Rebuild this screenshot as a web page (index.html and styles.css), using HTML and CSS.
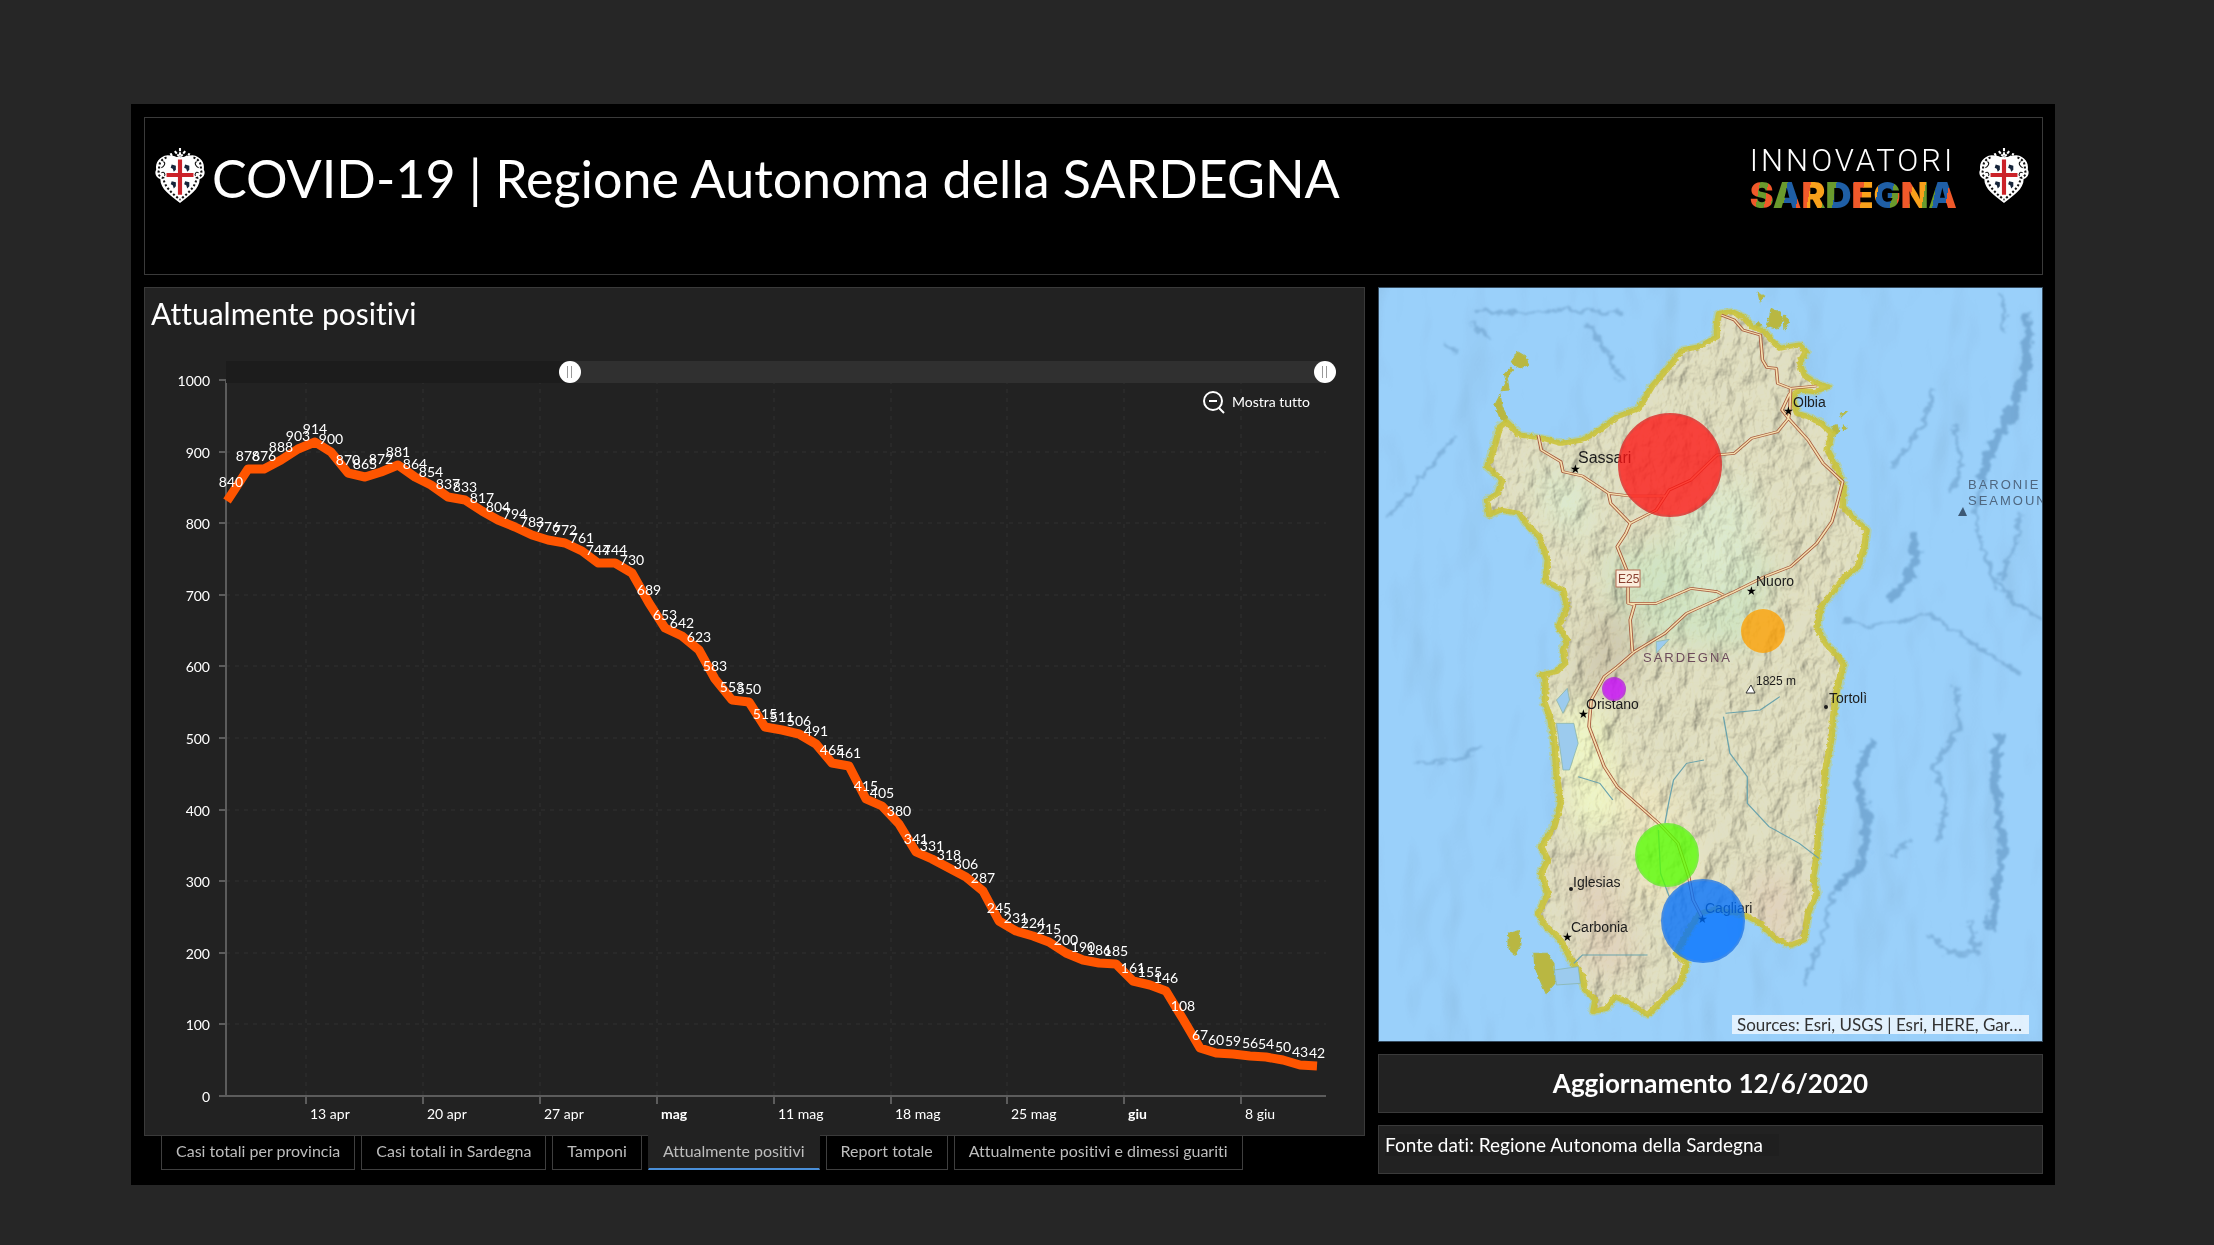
FILE: index.html
```html
<!DOCTYPE html>
<html lang="it">
<head>
<meta charset="utf-8">
<meta name="viewport" content="width=device-width, initial-scale=1">
<title>COVID-19 | Regione Autonoma della SARDEGNA</title>
<link rel="stylesheet" href="styles.css">
</head>
<body>
<svg class="defs" aria-hidden="true">
  <symbol id="crest" viewBox="0 0 50 56">
    <path d="M25 1v9M20 4l4 5M30 4l-4 5M16 6c1 4 5 5 9 5s8-1 9-5" fill="none" stroke="#fff" stroke-width="2" stroke-dasharray="3 1"/>
    <path d="M13 8C5 9 1 15 2 22c-2 3 0 8 4 9 0 10 10 16 19 23 9-7 19-13 19-23 4-1 6-6 4-9 1-7-3-13-11-14-4 0-8 2-12 2S17 8 13 8z" fill="#fff"/>
    <path d="M12 10C7 12 4 16 5 22c-2 4 0 7 4 8 1 9 9 15 16 21M38 10c5 2 8 6 7 12 2 4 0 7-4 8-1 9-9 15-16 21" fill="none" stroke="#111" stroke-width="2" stroke-dasharray="2 2"/>
    <path d="M9 14c3 2 0 5-2 6M41 14c-3 2 0 5 2 6M7 25c3-2 4 2 3 3M43 25c-3-2-4 2-3 3" fill="none" stroke="#111" stroke-width="1"/>
    <path d="M12 14c4-2 9-3 13-3s9 1 13 3v15c0 9-7 14-13 18-6-4-13-9-13-18z" fill="#fff"/>
    <path d="M25 12v34M12 27h26" stroke="#cb2229" stroke-width="4"/>
    <path d="M17 17l4 1v4l-2 2-1-3-2-1zM30 17l4 1v4l-2 2-1-3-2-1zM17 33l4 1v4l-2 2-1-3-2-1zM30 33l4 1v4l-2 2-1-3-2-1z" fill="#16243a"/>
  </symbol>
</svg>

<div class="frame">
  <header class="header">
    <svg class="crest"><use href="#crest"/></svg>
    <h1 class="header-title">COVID-19 | Regione Autonoma della SARDEGNA</h1>
    <div class="brand">
      <span class="brand-top">INNOVATORI</span>
      <span class="brand-bottom">SARDEGNA</span>
    </div>
    <svg class="crest"><use href="#crest"/></svg>
  </header>

  <main class="main">
    <section class="column">
      <div class="panel">
        <h2 class="panel-title">Attualmente positivi</h2>
        <div class="chart">
          <svg id="chart" class="chart-plot" viewBox="0 0 1219 791" role="img" aria-label="Attualmente positivi"></svg>
          <div class="range">
            <div class="range-track"><div class="range-selected"></div></div>
            <input class="range-input" type="range" min="0" max="1000" value="313" aria-label="Inizio periodo">
            <input class="range-input" type="range" min="0" max="1000" value="1000" aria-label="Fine periodo">
          </div>
          <button class="zoom-out" type="button">
            <svg class="zoom-icon" viewBox="0 0 24 24"><circle cx="11" cy="11" r="9"/><path d="M7 11h8M17 18l5 5"/></svg>
            Mostra tutto
          </button>
        </div>
      </div>
      <nav class="tabs">
        <button class="tab" type="button">Casi totali per provincia</button>
        <button class="tab" type="button">Casi totali in Sardegna</button>
        <button class="tab" type="button">Tamponi</button>
        <button class="tab tab-active" type="button">Attualmente positivi</button>
        <button class="tab" type="button">Report totale</button>
        <button class="tab" type="button">Attualmente positivi e dimessi guariti</button>
      </nav>
    </section>

    <aside class="column column-side">
      <div class="map">
        <svg class="map-view" viewBox="0 0 663 753" preserveAspectRatio="xMidYMid slice" role="img" aria-label="Mappa della Sardegna">
          <defs>
            <filter id="relief" x="0" y="0" width="100%" height="100%">
              <feTurbulence type="fractalNoise" baseFrequency=".05 .035" numOctaves="5" seed="8"/>
              <feDiffuseLighting surfaceScale="6" diffuseConstant="1.15" lighting-color="#fffdf4"><feDistantLight azimuth="215" elevation="58"/></feDiffuseLighting>
            </filter>
            <filter id="seabed" x="0" y="0" width="100%" height="100%">
              <feTurbulence type="fractalNoise" baseFrequency=".014 .007" numOctaves="3" seed="21"/>
              <feDiffuseLighting surfaceScale="9" diffuseConstant="1.1" lighting-color="#ffffff"><feDistantLight azimuth="200" elevation="65"/></feDiffuseLighting>
            </filter>
            <filter id="tint" x="-20%" y="-20%" width="140%" height="140%"><feGaussianBlur stdDeviation="14"/></filter>
            <filter id="ridge" filterUnits="userSpaceOnUse" x="-50" y="-50" width="1700" height="2500">
              <feTurbulence type="fractalNoise" baseFrequency=".04" numOctaves="3" seed="4" result="n"/>
              <feDisplacementMap in="SourceGraphic" in2="n" scale="34" xChannelSelector="R" yChannelSelector="G"/>
              <feGaussianBlur stdDeviation="3"/>
            </filter>
            <filter id="ragged" filterUnits="userSpaceOnUse" x="-50" y="-50" width="1700" height="2500">
              <feTurbulence type="fractalNoise" baseFrequency=".1" numOctaves="2" seed="3" result="n"/>
              <feDisplacementMap in="SourceGraphic" in2="n" scale="9" xChannelSelector="R" yChannelSelector="G"/>
            </filter>
            <path id="island" d="M805 100 835 95 860 110 880 140 910 155 925 180 945 205 965 200 990 195 1005 215 990 250 1000 285 1030 310 1055 320 1025 335 990 330 972 350 985 400 1010 410 1040 430 1065 460 1055 510 1075 560 1092 620 1090 680 1120 720 1145 750 1140 800 1125 860 1095 890 1070 930 1040 980 1030 1040 1050 1090 1080 1130 1092 1155 1082 1200 1075 1240 1068 1310 1065 1370 1050 1470 1045 1560 1035 1640 1030 1730 1022 1790 1030 1840 1010 1900 1000 1980 970 1995 940 1980 900 1930 865 1905 800 1885 760 1900 740 1940 705 2020 730 2050 715 2110 680 2150 640 2205 600 2170 565 2150 545 2185 515 2195 520 2160 495 2125 490 2090 460 2030 440 1980 400 1930 388 1900 410 1840 395 1780 410 1740 395 1700 425 1640 440 1570 430 1480 425 1380 415 1310 403 1270 405 1200 395 1185 430 1175 450 1150 445 1110 455 1080 435 1040 455 980 445 930 405 905 410 840 390 770 360 730 345 700 300 690 275 705 270 660 295 640 305 600 270 560 285 510 300 440 315 425 345 465 400 475 440 490 490 480 530 450 570 410 620 385 650 320 690 260 720 210 760 200 800 170 800 130z"/>
            <path id="islets" d="M340 215l20 15 5 25-20 8-20-15zM325 262l-15 20 5 25-12 25 18-2-5-35 15-25zM300 345l-12 30 12 40 12 12 5-15-12-30zM895 40l15 8-10 18zM925 85l20 12 8 25-15 25-22-8 5-25zM955 105l10 20-8 25zM895 125l8 12-12 4zM1085 400l14-4-12 14zM1065 440l12-6 4 20-8 14zM1092 436l8 8-8 8zM320 1960l22-8 6 40-14 32-12-14-4-22zM378 2020l30 0 16 30 2 60-20 30-14-40-12-40z"/>
            <clipPath id="land"><use href="#island" transform="translate(-9 -8) scale(.43367 .33333)"/></clipPath>
          </defs>
          <rect width="663" height="753" fill="#9ad0fa"/>
          <rect class="seabed" width="663" height="753" filter="url(#seabed)"/>
          <g class="ridges" transform="translate(-9 -8) scale(.43367 .33333)">
            <path class="ridge-wide" d="M1515 100 1515 260 1480 400 1440 490 1410 600M1250 760 1260 830 1240 900 1200 960M1450 1360 1440 1500 1460 1700 1430 1950M1160 1380 1120 1500 1150 1620 1130 1760 1070 1830"/>
            <path class="ridge-thin" d="M1410 600 1395 700 1410 800 1440 900 1500 980 1550 1020M1070 1830 1040 1980 1000 2120M1460 40 1465 150M1300 330 1280 420 1240 500 1200 560M1350 440 1365 550 1340 640M1500 700 1490 800 1450 900M240 90 330 100 440 90 590 100M230 130 280 180M500 130 540 200 580 300M170 190 200 220M40 710 80 660 200 460M1090 1020 1150 1040 1240 1020 1290 1000M1290 1000 1400 1100 1500 1180M1350 1220 1360 1340 1300 1460 1330 1560 1310 1690M1290 1960 1330 2020 1400 2020 1380 1920M100 1450 200 1440 260 1400M1200 1730 1250 1680"/>
          </g>
          <g transform="translate(-9 -8) scale(.43367 .33333)" filter="url(#ragged)">
            <use href="#island" class="shore-glow"/>
            <use href="#islets" class="islets"/>
          </g>
          <g clip-path="url(#land)">
            <rect width="663" height="753" fill="#e0dfc4"/>
            <g filter="url(#tint)">
              <path d="M225 270l80-20 90 20-20 90-130-10z" fill="#d0e3c4"/>
              <path d="M170 430l50-20 30 120-50 20z" fill="#eef5c8"/>
              <path d="M210 330l50-10-10 80-50 10z" fill="#cfc9b0"/>
              <path d="M230 480l60 20 40 100-70 20z" fill="#ece6c4"/>
              <path d="M370 580l50 10-10 80-40-30zM190 570l40 0 30 110-50 10z" fill="#e0d2bd"/>
              <path d="M290 220l80-30 10 60-50 80zM150 180l60 10 0 70-40-30z" fill="#dce9cf"/>
            </g>
            <rect class="relief" width="663" height="753" filter="url(#relief)"/>
          </g>
          <g transform="translate(-9 -8) scale(.43367 .33333)">
            <use href="#island" class="coast" filter="url(#ragged)"/>
            <path class="lagoon" d="M430 1330 470 1330 480 1390 460 1470 445 1470zM430 1260 455 1225 460 1260 445 1300zM425 2070 480 2060 485 2110 430 2115zM660 1085 690 1078 660 1120z"/>
            <path class="river" d="M480 1490 530 1510 560 1560M680 1630 690 1560 700 1500 730 1450 770 1440M820 1300 900 1290 945 1250M815 1310 830 1420 870 1490 870 1570 920 1640 990 1690 1035 1735M665 1650 670 1780 690 1850M470 2050 490 2025 640 2025"/>
            <path class="road" d="M810 105 840 120 860 150 900 165 905 240 915 262 937 265 940 310 970 325 1030 318M970 325 968 390 965 415 940 455 880 475 840 520 800 525 740 600 690 630 660 690 600 730M965 415 1010 480 1045 550 1090 605 1075 680 1065 725 1030 790 970 860 910 890 840 935 790 965 730 1000 680 1060 610 1115 570 1160 540 1190 510 1260 505 1340 540 1460 570 1520 640 1600 670 1635 710 1690 735 1790 745 1860 765 1910M388 465 395 510 440 545 445 575 490 588 550 640 555 670 600 730 590 760 570 800 595 880 595 970 610 975 600 1020 605 1115M550 640 600 648 680 648M595 970 660 970 740 925 800 935 815 945M968 340 950 390 965 415"/>
            <path class="road-inner" d="M810 105 840 120 860 150 900 165 905 240 915 262 937 265 940 310 970 325 1030 318M970 325 968 390 965 415 940 455 880 475 840 520 800 525 740 600 690 630 660 690 600 730M965 415 1010 480 1045 550 1090 605 1075 680 1065 725 1030 790 970 860 910 890 840 935 790 965 730 1000 680 1060 610 1115 570 1160 540 1190 510 1260 505 1340 540 1460 570 1520 640 1600 670 1635 710 1690 735 1790 745 1860 765 1910M388 465 395 510 440 545 445 575 490 588 550 640 555 670 600 730 590 760 570 800 595 880 595 970 610 975 600 1020 605 1115M550 640 600 648 680 648M595 970 660 970 740 925 800 935 815 945M968 340 950 390 965 415"/>
          </g>
          <rect x="237" y="282" width="24" height="17" fill="#fbeedd" stroke="#b26a50"/>
          <g class="map-text">
            <text class="map-road" x="239" y="295">E25</text>
            <g class="map-star">
              <text x="404" y="127">★</text><text x="191" y="185">★</text><text x="367" y="307">★</text>
              <text x="199" y="430">★</text><text x="183" y="653">★</text><text x="318" y="635">★</text>
            </g>
            <circle cx="447" cy="419" r="2"/><circle cx="192" cy="601" r="2"/>
            <path d="M367 405h9l-4-8z" fill="#fff" stroke="#333"/>
            <path d="M579 228h9l-4-9z" fill="#3d5874"/>
            <text x="414" y="119">Olbia</text>
            <text class="map-large" x="199" y="175">Sassari</text>
            <text x="377" y="298">Nuoro</text>
            <text x="207" y="421">Oristano</text>
            <text x="450" y="415">Tortolì</text>
            <text class="map-small" x="377" y="397">1825 m</text>
            <text x="194" y="599">Iglesias</text>
            <text x="192" y="644">Carbonia</text>
            <text x="326" y="625">Cagliari</text>
            <text class="map-region" x="264" y="374">SARDEGNA</text>
            <text class="map-sea" x="589" y="201">BARONIE</text>
            <text class="map-sea" x="589" y="217">SEAMOUNT</text>
          </g>
          <g class="bubbles">
            <circle cx="291" cy="177" r="51" fill="#ff1414" stroke="#e02020"/>
            <circle cx="384" cy="343" r="22" fill="#ffa000" stroke="none"/>
            <circle cx="235" cy="401" r="11" fill="#c800ff" stroke="#b51ce0"/>
            <circle cx="288" cy="567" r="31" fill="#55ff00" stroke="#5fee20"/>
            <circle cx="324" cy="633" r="41" fill="#0070ff" stroke="#1b74e8"/>
          </g>
        </svg>
        <p class="map-credit">Sources: Esri, USGS | Esri, HERE, Gar…</p>
      </div>
      <p class="box box-update">Aggiornamento 12/6/2020</p>
      <p class="box box-source"><span>Fonte dati: Regione Autonoma della Sardegna</span></p>
    </aside>
  </main>
</div>
<script src="chart.js"></script>
</body>
</html>
```
FILE: styles.css
```css
* { box-sizing: border-box; }
body {
  margin: 0;
  min-height: 100vh;
  padding: 104px 159px 60px 131px;
  display: flex;
  background: #262626;
  color: #fff;
  font-family: Lato, "Open Sans", sans-serif;
  font-variant-ligatures: none;
}
h1, h2, p { margin: 0; font-weight: 400; }
button { font: inherit; font-variant-ligatures: none; margin: 0; }
.defs { position: absolute; width: 0; height: 0; }

.frame {
  flex: 1;
  min-width: 0;
  display: flex;
  flex-direction: column;
  gap: 12px;
  padding: 13px 12px 11px 13px;
  background: #000;
}

.header {
  display: flex;
  align-items: flex-start;
  height: 158px;
  padding: 26px 12px 0 9px;
  border: 1px solid #3a3a3a;
}
.crest { width: 52px; height: 58px; margin-top: 3px; flex: none; }
.header-title {
  flex: 1;
  padding-left: 6px;
  font-size: 52px;
  line-height: 68px;
  white-space: nowrap;
}
.brand { display: flex; flex-direction: column; margin-right: 21px; }
.brand-top {
  font: 300 31px/34px Roboto, sans-serif;
  letter-spacing: 3px;
}
.brand-bottom {
  font: 900 36px/34px Inter, sans-serif;
  color: transparent;
  background: linear-gradient(100deg, #f0592a 0 5%, #6a9a2d 5% 9%, #f0592a 9% 12%, #6a9a2d 12% 18%, #1f5fa6 18% 24%, #f0592a 24% 29%, #f9a11b 29% 36%, #6a9a2d 36% 41%, #1f5fa6 41% 49%, #f0592a 49% 54%, #f9a11b 54% 61%, #1f5fa6 61% 68%, #6a9a2d 68% 71%, #f0592a 71% 77%, #f9a11b 77% 83%, #6a9a2d 83% 88%, #1f5fa6 88% 94%, #f0592a 94%);
  background-clip: text;
  -webkit-background-clip: text;
}

.main {
  flex: 1;
  display: grid;
  grid-template-columns: minmax(0, 1221fr) minmax(0, 665fr);
  gap: 13px;
}
.column { display: flex; flex-direction: column; }
.column-side { gap: 12px; }

.panel { border: 1px solid #3a3a3a; background: #222; }
.panel-title { height: 56px; padding-left: 6px; font-size: 30px; line-height: 50px; }
.chart { position: relative; }
.chart-plot { display: block; width: 100%; height: auto; font-size: 14px; }
.chart-plot text { fill: #fff; }
.grid { stroke: #303030; stroke-dasharray: 4 5; }
.axis { stroke: #5c5c5c; stroke-width: 2; fill: none; }
.tick { stroke: #5c5c5c; stroke-width: 2; }
.series { fill: none; stroke: #ff5500; stroke-width: 9; stroke-linejoin: round; }
.y-label { text-anchor: end; }
.value { text-anchor: middle; }
.month { font-weight: 700; }

.range { position: absolute; top: 17px; left: 70px; right: 28px; height: 22px; }
.range-track { height: 22px; margin: 0 11px; background: #1c1c1c; }
.range-selected { height: 22px; margin-left: 31%; background: #303030; }
.range-input {
  position: absolute;
  inset: 0;
  width: 100%;
  height: 22px;
  margin: 0;
  appearance: none;
  background: none;
  pointer-events: none;
}
.range-input::-webkit-slider-thumb {
  appearance: none;
  width: 22px;
  height: 22px;
  border: 0;
  border-radius: 50%;
  pointer-events: auto;
  background: linear-gradient(90deg, #fff 8px, #999 8px 9px, #fff 9px 12px, #999 12px 13px, #fff 13px) center / 22px 12px no-repeat #fff;
}
.zoom-out {
  position: absolute;
  top: 46px;
  right: 54px;
  display: flex;
  align-items: center;
  gap: 6px;
  padding: 0;
  border: 0;
  background: none;
  color: #fff;
  font-size: 14px;
  line-height: 24px;
}
.zoom-icon { width: 24px; height: 24px; fill: none; stroke: #fff; stroke-width: 2; }

.tabs { display: flex; gap: 6px; padding-left: 17px; }
.tab {
  height: 34px;
  padding: 0 14px 4px;
  border: 1px solid #3f3f3f;
  border-top: 0;
  background: #000;
  color: #bdbdbd;
  font-size: 16px;
  line-height: 26px;
  white-space: nowrap;
}
.tab-active {
  margin-top: -1px;
  height: 35px;
  padding-bottom: 2px;
  border-color: #222;
  border-bottom: 2px solid #4a8fd8;
  background: #222;
}

.map { position: relative; border: 1px solid #34495c; overflow: hidden; }
.map-view { display: block; width: 100%; height: auto; }
.seabed { mix-blend-mode: multiply; opacity: .4; }
.relief { mix-blend-mode: multiply; opacity: .7; }
.ridges { fill: none; filter: url(#ridge); }
.ridge-wide { stroke: #5d93bf; stroke-width: 20; opacity: .6; }
.ridge-thin { stroke: #6c9fca; stroke-width: 9; opacity: .6; }
.shore-glow { fill: none; stroke: #b9cf8c; stroke-width: 24; opacity: .6; stroke-linejoin: round; }
.islets { fill: #b9b743; stroke: #b3bb4e; stroke-width: 3; }
.coast { fill: none; stroke: #cbc336; stroke-width: 15; stroke-linejoin: round; opacity: .85; }
.lagoon { fill: #9ccbee; stroke: #8ab5a8; stroke-width: 2; }
.river { fill: none; stroke: #6ba3ac; stroke-width: 3; }
.road { fill: none; stroke: #a5583c; stroke-width: 8; stroke-linejoin: round; }
.road-inner { fill: none; stroke: #f5dfae; stroke-width: 4; stroke-linejoin: round; }
.map-text { font-family: "Liberation Sans", Arial, sans-serif; font-size: 14px; fill: #1c1c1c; }
.map-star { font-family: "DejaVu Sans", sans-serif; font-size: 12px; fill: #000; }
.map-large { font-size: 16px; }
.map-small { font-size: 12px; }
.map-road { font-size: 12px; fill: #8a4030; }
.map-region { font-size: 13px; letter-spacing: 2px; fill: #6d4c5c; }
.map-sea { font-size: 13px; letter-spacing: 2px; fill: #4f6780; }
.bubbles { opacity: .77; stroke-width: 2; }
.map-credit {
  position: absolute;
  right: 13px;
  bottom: 7px;
  padding: 0 7px 0 5px;
  background: rgba(255, 255, 255, .7);
  color: #323232;
  font-size: 17px;
  line-height: 19px;
}

.box { border: 1px solid #3a3a3a; background: #222; }
.box-update { font-size: 26px; font-weight: 700; line-height: 57px; text-align: center; }
.box-source { flex: 1; padding: 8px 6px; font-size: 19px; line-height: 22px; }
.box-source span { display: inline-block; padding-right: 16px; background: #1f1f1f; }
```
FILE: chart.js
```js
const values = [840, 876, 876, 888, 903, 914, 900, 870, 865, 872, 881, 864, 854, 837, 833, 817, 804, 794,
  783, 776, 772, 761, 744, 744, 730, 689, 653, 642, 623, 583, 553, 550, 515, 511, 506, 491, 465, 461,
  415, 405, 380, 341, 331, 318, 306, 287, 245, 231, 224, 215, 200, 190, 186, 185, 161, 155, 146, 108,
  67, 60, 59, 56, 54, 50, 43, 42];
const weeks = ['13 apr', '20 apr', '27 apr', 'mag', '11 mag', '18 mag', '25 mag', 'giu', '8 giu'];

const plotLeft = 81, plotRight = 1181, plotBase = 752, plotTop = 36, day = 16.7;
const x = i => Math.round(86 + i * day);
const y = v => Math.round(plotBase - v * (plotBase - plotTop) / 1000);

let out = '';
for (let v = 0; v <= 1000; v += 100) {
  if (v > 0) out += `<line class="grid" x1="${plotLeft}" x2="${plotRight}" y1="${y(v)}" y2="${y(v)}"/>`;
  out += `<line class="tick" x1="${plotLeft - 7}" x2="${plotLeft}" y1="${y(v)}" y2="${y(v)}"/>`;
  out += `<text class="y-label" x="65" y="${y(v) + 6}">${v}</text>`;
}
weeks.forEach((name, i) => {
  const wx = Math.round(161 + i * day * 7);
  const month = name.includes(' ') ? '' : 'month';
  out += `<line class="grid" x1="${wx}" x2="${wx}" y1="${plotTop}" y2="${plotBase}"/>`;
  out += `<line class="tick" x1="${wx}" x2="${wx}" y1="${plotBase}" y2="${plotBase + 8}"/>`;
  out += `<text class="${month}" x="${wx + 4}" y="775">${name}</text>`;
});
out += `<path class="axis" d="M${plotLeft} ${plotTop}V${plotBase}H${plotRight}"/>`;
out += `<polyline class="series" points="82,157 ${values.map((v, i) => `${x(i)},${y(v)}`).join(' ')}"/>`;
values.forEach((v, i) => { out += `<text class="value" x="${x(i)}" y="${y(v) - 8}">${v}</text>`; });
document.getElementById('chart').innerHTML = out;
```
